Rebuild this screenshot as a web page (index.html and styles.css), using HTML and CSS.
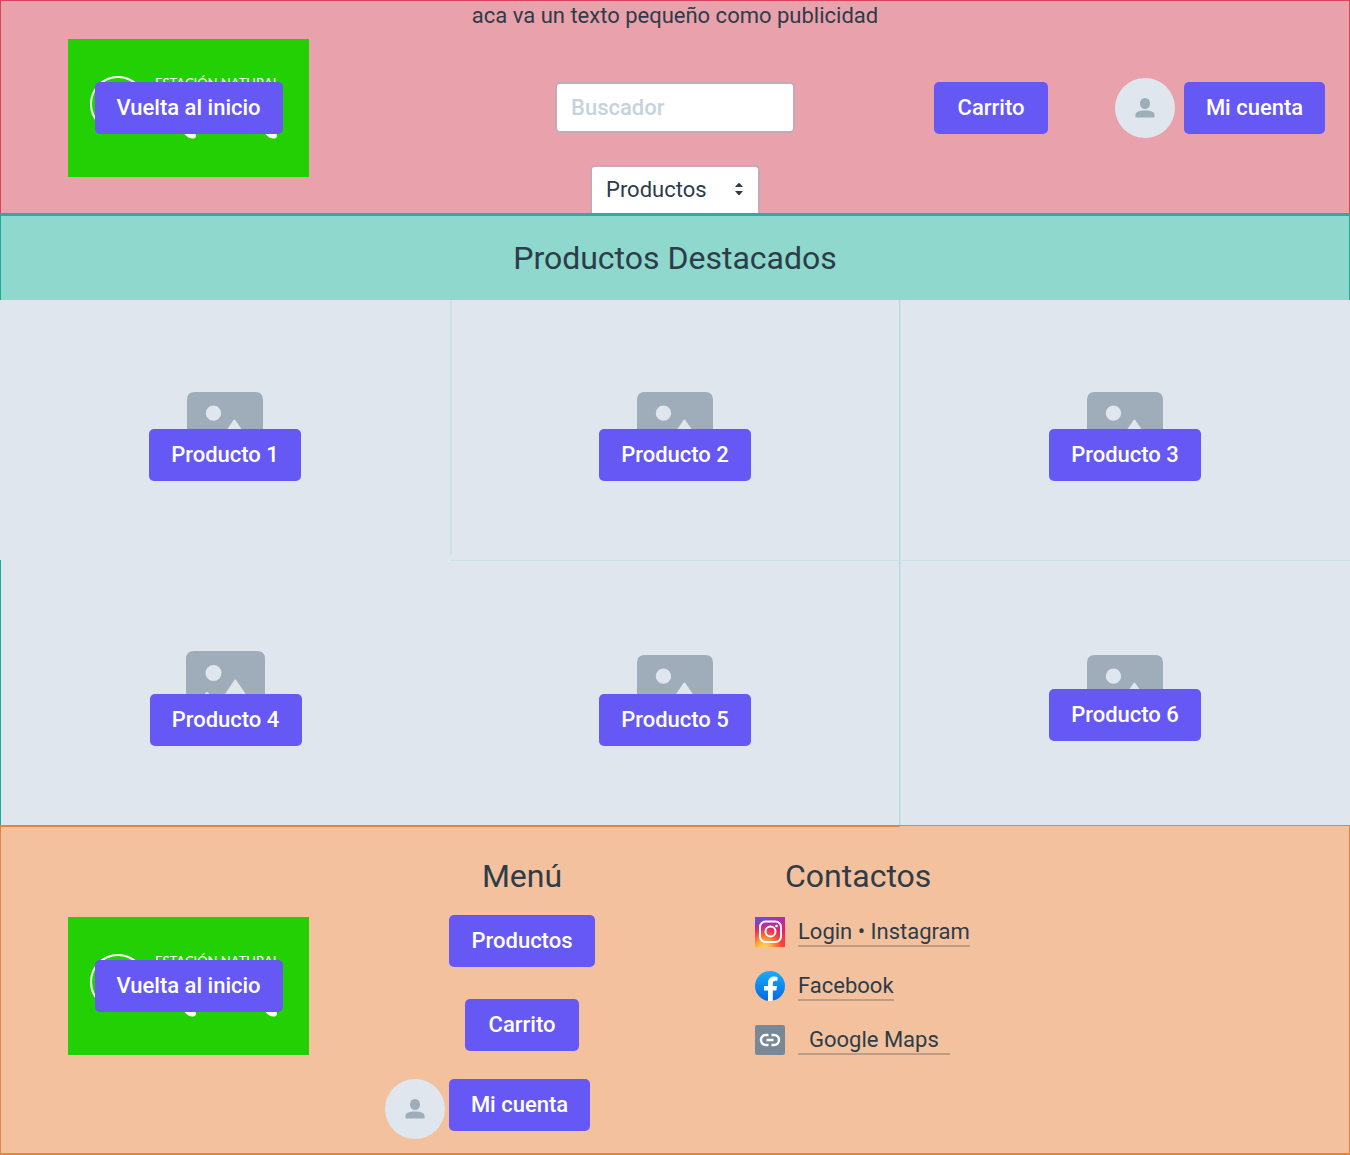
FILE: index.html
```html
<!DOCTYPE html>
<html lang="es">
<head>
<meta charset="utf-8">
<meta name="viewport" content="width=device-width, initial-scale=1">
<title>Estación Natural</title>
<link rel="stylesheet" href="styles.css">
</head>
<body>
<svg class="defs" aria-hidden="true">
  <defs>
    <symbol id="photo" viewBox="0 0 79 79">
      <path fill="#9eadb9" fill-rule="evenodd" d="M8 0H71Q79 0 79 8V71Q79 79 71 79H8Q0 79 0 71V8Q0 0 8 0ZM27.500 14A8 8 0 1 0 27.500 30A8 8 0 1 0 27.500 14ZM9 66H70V58L50.500 29.500Q49.300 27.500 48 29.500L33 52L22.500 42Q21 40 19.500 42L9 54Z"/>
    </symbol>
    <symbol id="person" viewBox="0 0 60 60">
      <circle cx="30" cy="30" r="30" fill="#dfe6ed"/>
      <ellipse cx="30" cy="25.500" rx="5" ry="5.500" fill="#9eadb9"/>
      <path fill="#9eadb9" d="M20.500 39.500V37C20.500 33.500 25 32.500 30 32.500S39.500 33.500 39.500 37V39.500Z"/>
    </symbol>
    <symbol id="brand" viewBox="0 0 241 138">
      <path fill="#22d003" d="M0 0H241V138H0Z"/>
      <circle cx="50" cy="65" r="27" fill="none" stroke="#fff" stroke-width="2"/>
      <text x="87" y="49" class="brand-text">ESTACIÓN NATURAL</text>
      <path fill="#fff" d="M115 92C117 97 122 101 127 99Q129 97 127 94L122 90ZM196 92C198 97 203 101 208 99Q210 97 208 94L203 90Z"/>
    </symbol>
  </defs>
</svg>

<header class="header">
  <p class="promo">aca va un texto pequeño como publicidad</p>
  <div class="bar">
    <div class="logo">
      <svg class="logo-art" aria-hidden="true"><use href="#brand"/></svg>
      <button class="btn btn-home" type="button">Vuelta al inicio</button>
    </div>
    <div class="finder">
      <input class="search" type="search" placeholder="Buscador" aria-label="Buscador">
      <div class="picker">
        <select class="select" aria-label="Productos"><option>Productos</option></select>
        <svg class="arrows" viewBox="0 0 10 14" aria-hidden="true"><path fill="#2d3c48" d="M1 5L4 1.500Q5 .500 6 1.500L9 5ZM1 9H9L6 12.500Q5 13.500 4 12.500Z"/></svg>
      </div>
    </div>
    <div class="actions">
      <button class="btn btn-cart" type="button">Carrito</button>
      <div class="account">
        <svg class="avatar" aria-hidden="true"><use href="#person"/></svg>
        <button class="btn btn-account" type="button">Mi cuenta</button>
      </div>
    </div>
  </div>
</header>

<main class="main">
  <h1 class="title banner">Productos Destacados</h1>
  <div class="products">
    <article class="card"><svg class="photo" aria-hidden="true"><use href="#photo"/></svg><button class="btn btn-product" type="button">Producto 1</button></article>
    <article class="card line-left"><svg class="photo" aria-hidden="true"><use href="#photo"/></svg><button class="btn btn-product" type="button">Producto 2</button></article>
    <article class="card line-strong"><svg class="photo" aria-hidden="true"><use href="#photo"/></svg><button class="btn btn-product" type="button">Producto 3</button></article>
    <article class="card low edge"><svg class="photo photo-large" aria-hidden="true"><use href="#photo"/></svg><button class="btn btn-product" type="button">Producto 4</button></article>
    <article class="card low line-top"><svg class="photo" aria-hidden="true"><use href="#photo"/></svg><button class="btn btn-product" type="button">Producto 5</button></article>
    <article class="card line-top line-strong"><svg class="photo" aria-hidden="true"><use href="#photo"/></svg><button class="btn btn-product" type="button">Producto 6</button></article>
  </div>
</main>

<footer class="footer">
  <div class="footer-logo">
    <div class="logo">
      <svg class="logo-art" aria-hidden="true"><use href="#brand"/></svg>
      <button class="btn btn-home" type="button">Vuelta al inicio</button>
    </div>
  </div>
  <nav class="menu" aria-label="Menú">
    <h2 class="title menu-item">Menú</h2>
    <div class="menu-item"><button class="btn btn-list" type="button">Productos</button></div>
    <div class="menu-item"><button class="btn btn-cart" type="button">Carrito</button></div>
    <div class="account account-menu">
      <svg class="avatar" aria-hidden="true"><use href="#person"/></svg>
      <button class="btn btn-account" type="button">Mi cuenta</button>
    </div>
  </nav>
  <section class="contacts">
    <h2 class="title contacts-title">Contactos</h2>
    <div class="contact">
      <svg class="contact-icon" viewBox="0 0 30 30" aria-hidden="true">
        <defs>
          <linearGradient id="ig" x1="0" y1="0" x2=".3" y2="1"><stop offset="0" stop-color="#4f5bd5"/><stop offset=".3" stop-color="#a72fb4"/><stop offset=".65" stop-color="#ec1c68"/><stop offset="1" stop-color="#f5443e"/></linearGradient>
          <radialGradient id="glow" cx=".3" cy="1.050" r=".85"><stop offset="0" stop-color="#ffdc6a"/><stop offset=".3" stop-color="#ffb13d"/><stop offset=".65" stop-color="#f8532f" stop-opacity=".8"/><stop offset="1" stop-color="#ec1c68" stop-opacity="0"/></radialGradient>
        </defs>
        <path fill="url(#ig)" d="M0 0H30V30H0Z"/><path fill="url(#glow)" d="M0 0H30V30H0Z"/>
        <rect x="5" y="4.500" width="21" height="20.500" rx="5.500" fill="none" stroke="#fff" stroke-width="2"/>
        <circle cx="15.500" cy="14.500" r="5" fill="none" stroke="#fff" stroke-width="2"/><circle cx="21.500" cy="9" r="1.300" fill="#fff"/>
      </svg>
      <a class="link" href="#instagram">Login • Instagram</a>
    </div>
    <div class="contact">
      <svg class="contact-icon" viewBox="0 0 30 30" aria-hidden="true">
        <defs><linearGradient id="fb" x1="0" y1="0" x2="0" y2="1"><stop offset="0" stop-color="#18acfe"/><stop offset="1" stop-color="#0668e1"/></linearGradient></defs>
        <circle cx="15" cy="15" r="15" fill="url(#fb)"/>
        <path fill="#fff" d="M13 29.900V19.500H9V15H13V12.500C13 7.800 15.500 5.500 19 5.500Q21 5.500 22.500 5.900V9.700H20.500C18.500 9.700 17.800 11 17.800 12.600V15H22L21.300 19.500H17.800V29.700Q15.500 30.200 13 29.900Z"/>
      </svg>
      <a class="link" href="#facebook">Facebook</a>
    </div>
    <div class="contact">
      <svg class="contact-icon" viewBox="0 0 30 30" aria-hidden="true">
        <rect width="30" height="30" rx="2" fill="#788896"/>
        <path fill="none" stroke="#fff" stroke-width="2.400" d="M13.500 10H11A5 5 0 0 0 11 20H13.500M16.500 10H19A5 5 0 0 1 19 20H16.500M11.500 15H18.500"/>
      </svg>
      <a class="link link-wide" href="#maps">Google Maps</a>
    </div>
  </section>
</footer>
</body>
</html>
```
FILE: styles.css
```css
* { box-sizing: border-box; }

body {
  margin: 0;
  font-family: Roboto, "Liberation Sans", sans-serif;
  font-size: 22px;
  line-height: 28px;
  color: #2d3c48;
}

.defs { position: absolute; width: 0; height: 0; }

/* shared pieces */
.btn {
  height: 52px;
  padding: 0;
  border: 0;
  border-radius: 5px;
  background: #6558f5;
  color: #fff;
  font: 500 22px/28px Roboto, "Liberation Sans", sans-serif;
  white-space: nowrap;
}
.btn-home { width: 188px; }
.btn-cart { width: 114px; }
.btn-account { width: 141px; }
.btn-list { width: 146px; }
.btn-product { width: 152px; }

.title {
  margin: 0;
  font-size: 32px;
  line-height: 40px;
  font-weight: 400;
  text-align: center;
}

.logo { display: grid; width: 241px; place-items: center; }
.logo > * { grid-area: 1 / 1; }
.logo-art { display: block; width: 241px; height: 138px; }
.brand-text { font: 400 13px Lato, sans-serif; fill: #fff; }

.account { display: flex; align-items: center; gap: 9px; }
.avatar { display: block; width: 60px; height: 60px; }

/* header */
.header {
  background: #e9a1ac;
  border: 1px solid #d9435c;
  border-bottom: 0;
}
.promo { margin: 0; padding: 1px 0 9px; text-align: center; }
.bar {
  display: grid;
  grid-template-columns: minmax(0, 487fr) 240px minmax(0, 530fr);
  align-items: start;
  padding: 0 24px 0 67px;
}
.finder { display: flex; flex-direction: column; align-items: center; gap: 32px; padding-top: 43px; }
.search, .select {
  appearance: none;
  border: 2px solid #c4a9b8;
  background: #fff;
  color: #2d3c48;
  font: 400 22px/28px Roboto, "Liberation Sans", sans-serif;
  padding: 0 14px;
}
.search { width: 240px; height: 51px; border-radius: 5px; }
.search::placeholder { color: #c6d2dd; font-weight: 500; opacity: 1; }
.picker { display: grid; width: 170px; align-items: center; }
.picker > * { grid-area: 1 / 1; }
.select { width: 170px; height: 48px; border-bottom: 0; border-radius: 5px 5px 0 0; }
.arrows { width: 10px; height: 14px; justify-self: end; margin-right: 16px; pointer-events: none; }
.actions { display: flex; justify-content: flex-end; align-items: center; gap: 67px; padding-top: 39px; }

/* featured products */
.main { background: #dfe6ed; }
.banner {
  padding: 22px 0;
  background: #8ed8cd;
  border: 1px solid #1aab9b;
  border-top: 3px solid #30ab9f;
  border-bottom: 0;
}
.products { display: grid; grid-template-columns: repeat(3, 1fr); grid-template-rows: 260px 265px; }
.card { display: grid; justify-items: center; align-items: center; }
.card > * { grid-area: 1 / 1; }
.photo { width: 76px; height: 76px; }
.photo-large { width: 79px; height: 79px; margin-bottom: 4px; }
.card .btn { align-self: start; margin-top: 129px; z-index: 1; }
.low .btn { margin-top: 134px; }
.line-left { background: linear-gradient(#c8e2e5, #c8e2e5) 0 0 / 2px 255px no-repeat; }
.line-strong { box-shadow: -1px 0 #b5dde0, inset 1px 0 #cbe3e6; }
.line-top { box-shadow: inset 0 1px #cbe3e6; }
.line-top.line-strong { box-shadow: -1px 0 #b5dde0, inset 1px 0 #cbe3e6, inset 0 1px #cbe3e6; }
.edge { border-left: 1px solid #1aab9b; }

/* footer */
.footer {
  display: grid;
  grid-template-columns: 384fr 369fr 595fr;
  align-items: start;
  padding: 30px 0 14px;
  background: linear-gradient(#ea8339, #ea8339) 0 0 / 66.667% 1px no-repeat, #f3c19d;
  border: 1px solid #ea8339;
  border-bottom-width: 2px;
}
.footer-logo { padding: 61px 0 0 67px; }
.menu { display: flex; flex-direction: column; width: 210px; }
.menu-item { padding-left: 64px; text-align: center; margin-bottom: 32px; height: 52px; }
.title.menu-item { height: 40px; margin-bottom: 19px; }
.account-menu { gap: 4px; margin-top: -4px; }
.account-menu .btn { align-self: flex-start; }
.contacts-title { padding-left: 31px; margin-bottom: 19px; text-align: left; }
.contact { display: flex; align-items: center; gap: 13px; height: 34px; padding-left: 1px; margin-bottom: 20px; }
.contact-icon { width: 30px; height: 30px; }
.link { padding-top: 2px; color: inherit; text-decoration: none; border-bottom: 2px solid #bf9c86; line-height: 26px; }
.link-wide { padding-left: 11px; padding-right: 11px; }
```
